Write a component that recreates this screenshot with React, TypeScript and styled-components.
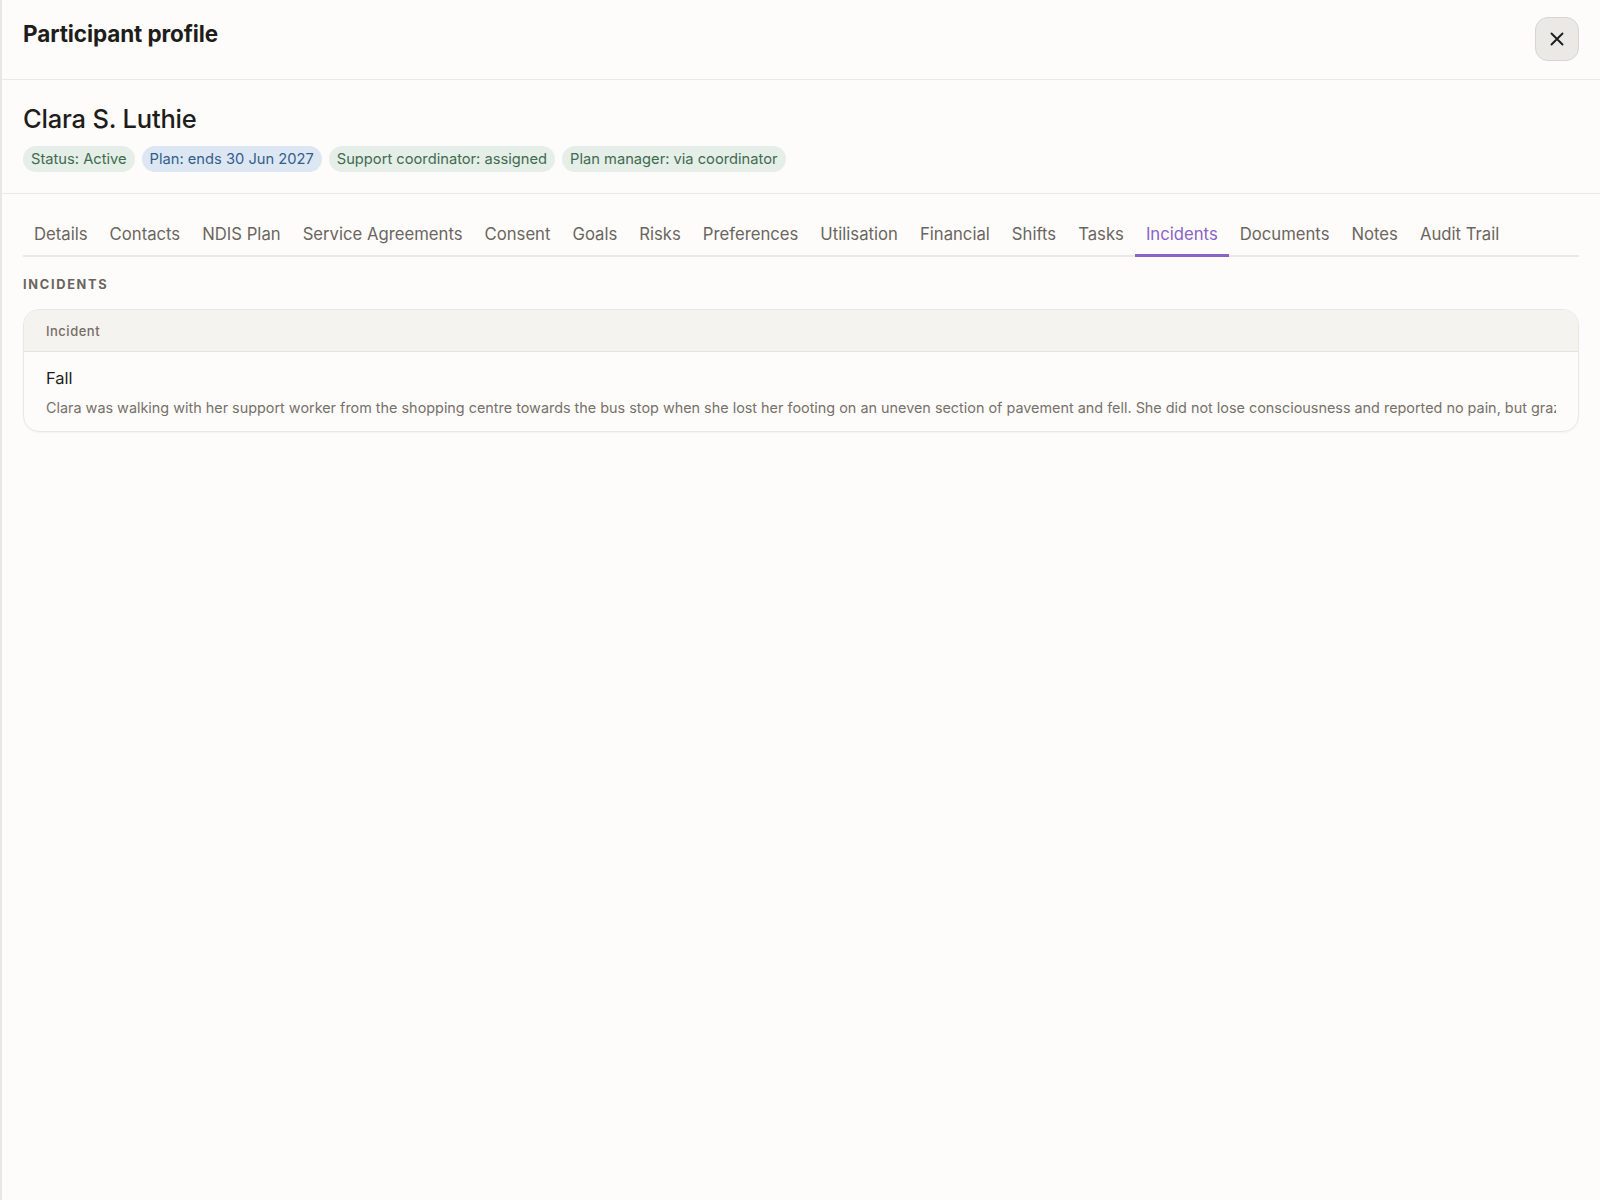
import { FC } from "react";
import styled, { createGlobalStyle } from "styled-components";

const GlobalStyle = createGlobalStyle`
  html, body {
    margin: 0;
    padding: 0;
    background: #fdfcfa;
  }
  body {
    font-family: "Inter", "Noto Sans", sans-serif;
    color: #1f1d1b;
  }
  * { box-sizing: border-box; }
`;

type Tone = "green" | "blue";

const TABS = [
  "Details",
  "Contacts",
  "NDIS Plan",
  "Service Agreements",
  "Consent",
  "Goals",
  "Risks",
  "Preferences",
  "Utilisation",
  "Financial",
  "Shifts",
  "Tasks",
  "Incidents",
  "Documents",
  "Notes",
  "Audit Trail",
];

const BADGES: { label: string; tone: Tone }[] = [
  { label: "Status: Active", tone: "green" },
  { label: "Plan: ends 30 Jun 2027", tone: "blue" },
  { label: "Support coordinator: assigned", tone: "green" },
  { label: "Plan manager: via coordinator", tone: "green" },
];

const INCIDENT_TEXT =
  "Clara was walking with her support worker from the shopping centre towards the bus stop when she lost her footing on an uneven section of pavement and fell. She did not lose consciousness and reported no pain, but grazed her left knee and palm. First aid was applied at the scene and her family was informed.";

const App: FC = () => {
  return (
    <>
      <GlobalStyle />
      <SPanel>
        <SHeader>
          <STitle>Participant profile</STitle>
          <SCloseButton aria-label="Close">
            <svg width="16" height="16" viewBox="0 0 16 16" fill="none">
              <path
                d="M2.5 2.5L13.5 13.5M13.5 2.5L2.5 13.5"
                stroke="#1f1d1b"
                strokeWidth="1.9"
                strokeLinecap="round"
              />
            </svg>
          </SCloseButton>
        </SHeader>

        <SSummary>
          <SName>Clara S. Luthie</SName>
          <SBadgeRow>
            {BADGES.map((b) => (
              <SBadge key={b.label} tone={b.tone}>
                {b.label}
              </SBadge>
            ))}
          </SBadgeRow>
        </SSummary>

        <SBody>
          <STabBar>
            {TABS.map((t) => (
              <STab key={t} active={t === "Incidents"}>
                {t}
              </STab>
            ))}
          </STabBar>

          <SSectionLabel>Incidents</SSectionLabel>

          <STable>
            <STableHead>Incident</STableHead>
            <STableRow>
              <SRowTitle>Fall</SRowTitle>
              <SRowText>{INCIDENT_TEXT}</SRowText>
            </STableRow>
          </STable>
        </SBody>
      </SPanel>
    </>
  );
};

export default App;

const SPanel = styled.div`
  min-height: 1200px;
  border-left: 2px solid #e9e7e3;
  background: #fdfcfa;
`;

const SHeader = styled.div`
  display: flex;
  align-items: flex-start;
  justify-content: space-between;
  height: 80px;
  padding: 17px 21px 0 21px;
  border-bottom: 1px solid #ebe9e5;
`;

const STitle = styled.h1`
  margin: 3px 0 0 0;
  font-size: 22.5px;
  font-weight: 700;
  letter-spacing: -0.1px;
  color: #1f1d1b;
`;

const SCloseButton = styled.button`
  width: 44px;
  height: 44px;
  border-radius: 13px;
  border: 1px solid #d8d5d0;
  background: #ebe9e5;
  display: flex;
  align-items: center;
  justify-content: center;
  cursor: pointer;
  padding: 0;
`;

const SSummary = styled.div`
  padding: 22px 21px 21px 21px;
  border-bottom: 1px solid #ebe9e5;
`;

const SName = styled.h2`
  margin: 0;
  font-size: 25.5px;
  font-weight: 500;
  letter-spacing: -0.2px;
  line-height: 34px;
  color: #1f1d1b;
`;

const SBadgeRow = styled.div`
  display: flex;
  gap: 7px;
  margin-top: 10px;
`;

const SBadge = styled.span<{ tone: Tone }>`
  display: inline-flex;
  align-items: center;
  height: 26px;
  padding: 0 8px;
  border-radius: 13px;
  font-size: 14.7px;
  background: ${(p) => (p.tone === "blue" ? "#dde7f3" : "#e5eee7")};
  color: ${(p) => (p.tone === "blue" ? "#345d8c" : "#3f6b51")};
`;

const SBody = styled.div`
  padding: 13px 21px 0 21px;
`;

const STabBar = styled.div`
  display: flex;
  border-bottom: 2px solid #ebe9e5;
`;

const STab = styled.div<{ active: boolean }>`
  padding: 17px 11px 10px 11px;
  font-size: 16.7px;
  color: ${(p) => (p.active ? "#8a63c6" : "#6b655f")};
  border-bottom: 3px solid ${(p) => (p.active ? "#8a63c6" : "transparent")};
  margin-bottom: -2px;
  white-space: nowrap;
  cursor: pointer;
`;

const SSectionLabel = styled.div`
  margin-top: 20px;
  font-size: 12.8px;
  font-weight: 700;
  letter-spacing: 1.7px;
  text-transform: uppercase;
  color: #6b645d;
`;

const STable = styled.div`
  margin-top: 17px;
  border: 1px solid #e9e7e3;
  border-radius: 16px;
  overflow: hidden;
  box-shadow: 0 1px 2px rgba(0, 0, 0, 0.04);
`;

const STableHead = styled.div`
  height: 42px;
  display: flex;
  align-items: center;
  padding: 0 22px;
  background: #f4f3ef;
  border-bottom: 1px solid #e6e4e0;
  font-size: 13px;
  font-weight: 500;
  letter-spacing: 0.5px;
  color: #756d66;
`;

const STableRow = styled.div`
  padding: 15px 22px 13px 22px;
`;

const SRowTitle = styled.div`
  font-size: 16.5px;
  color: #1f1d1b;
  line-height: 22px;
`;

const SRowText = styled.div`
  margin-top: 9px;
  font-size: 14.4px;
  color: #77716b;
  white-space: nowrap;
  overflow: hidden;
  line-height: 20px;
`;
